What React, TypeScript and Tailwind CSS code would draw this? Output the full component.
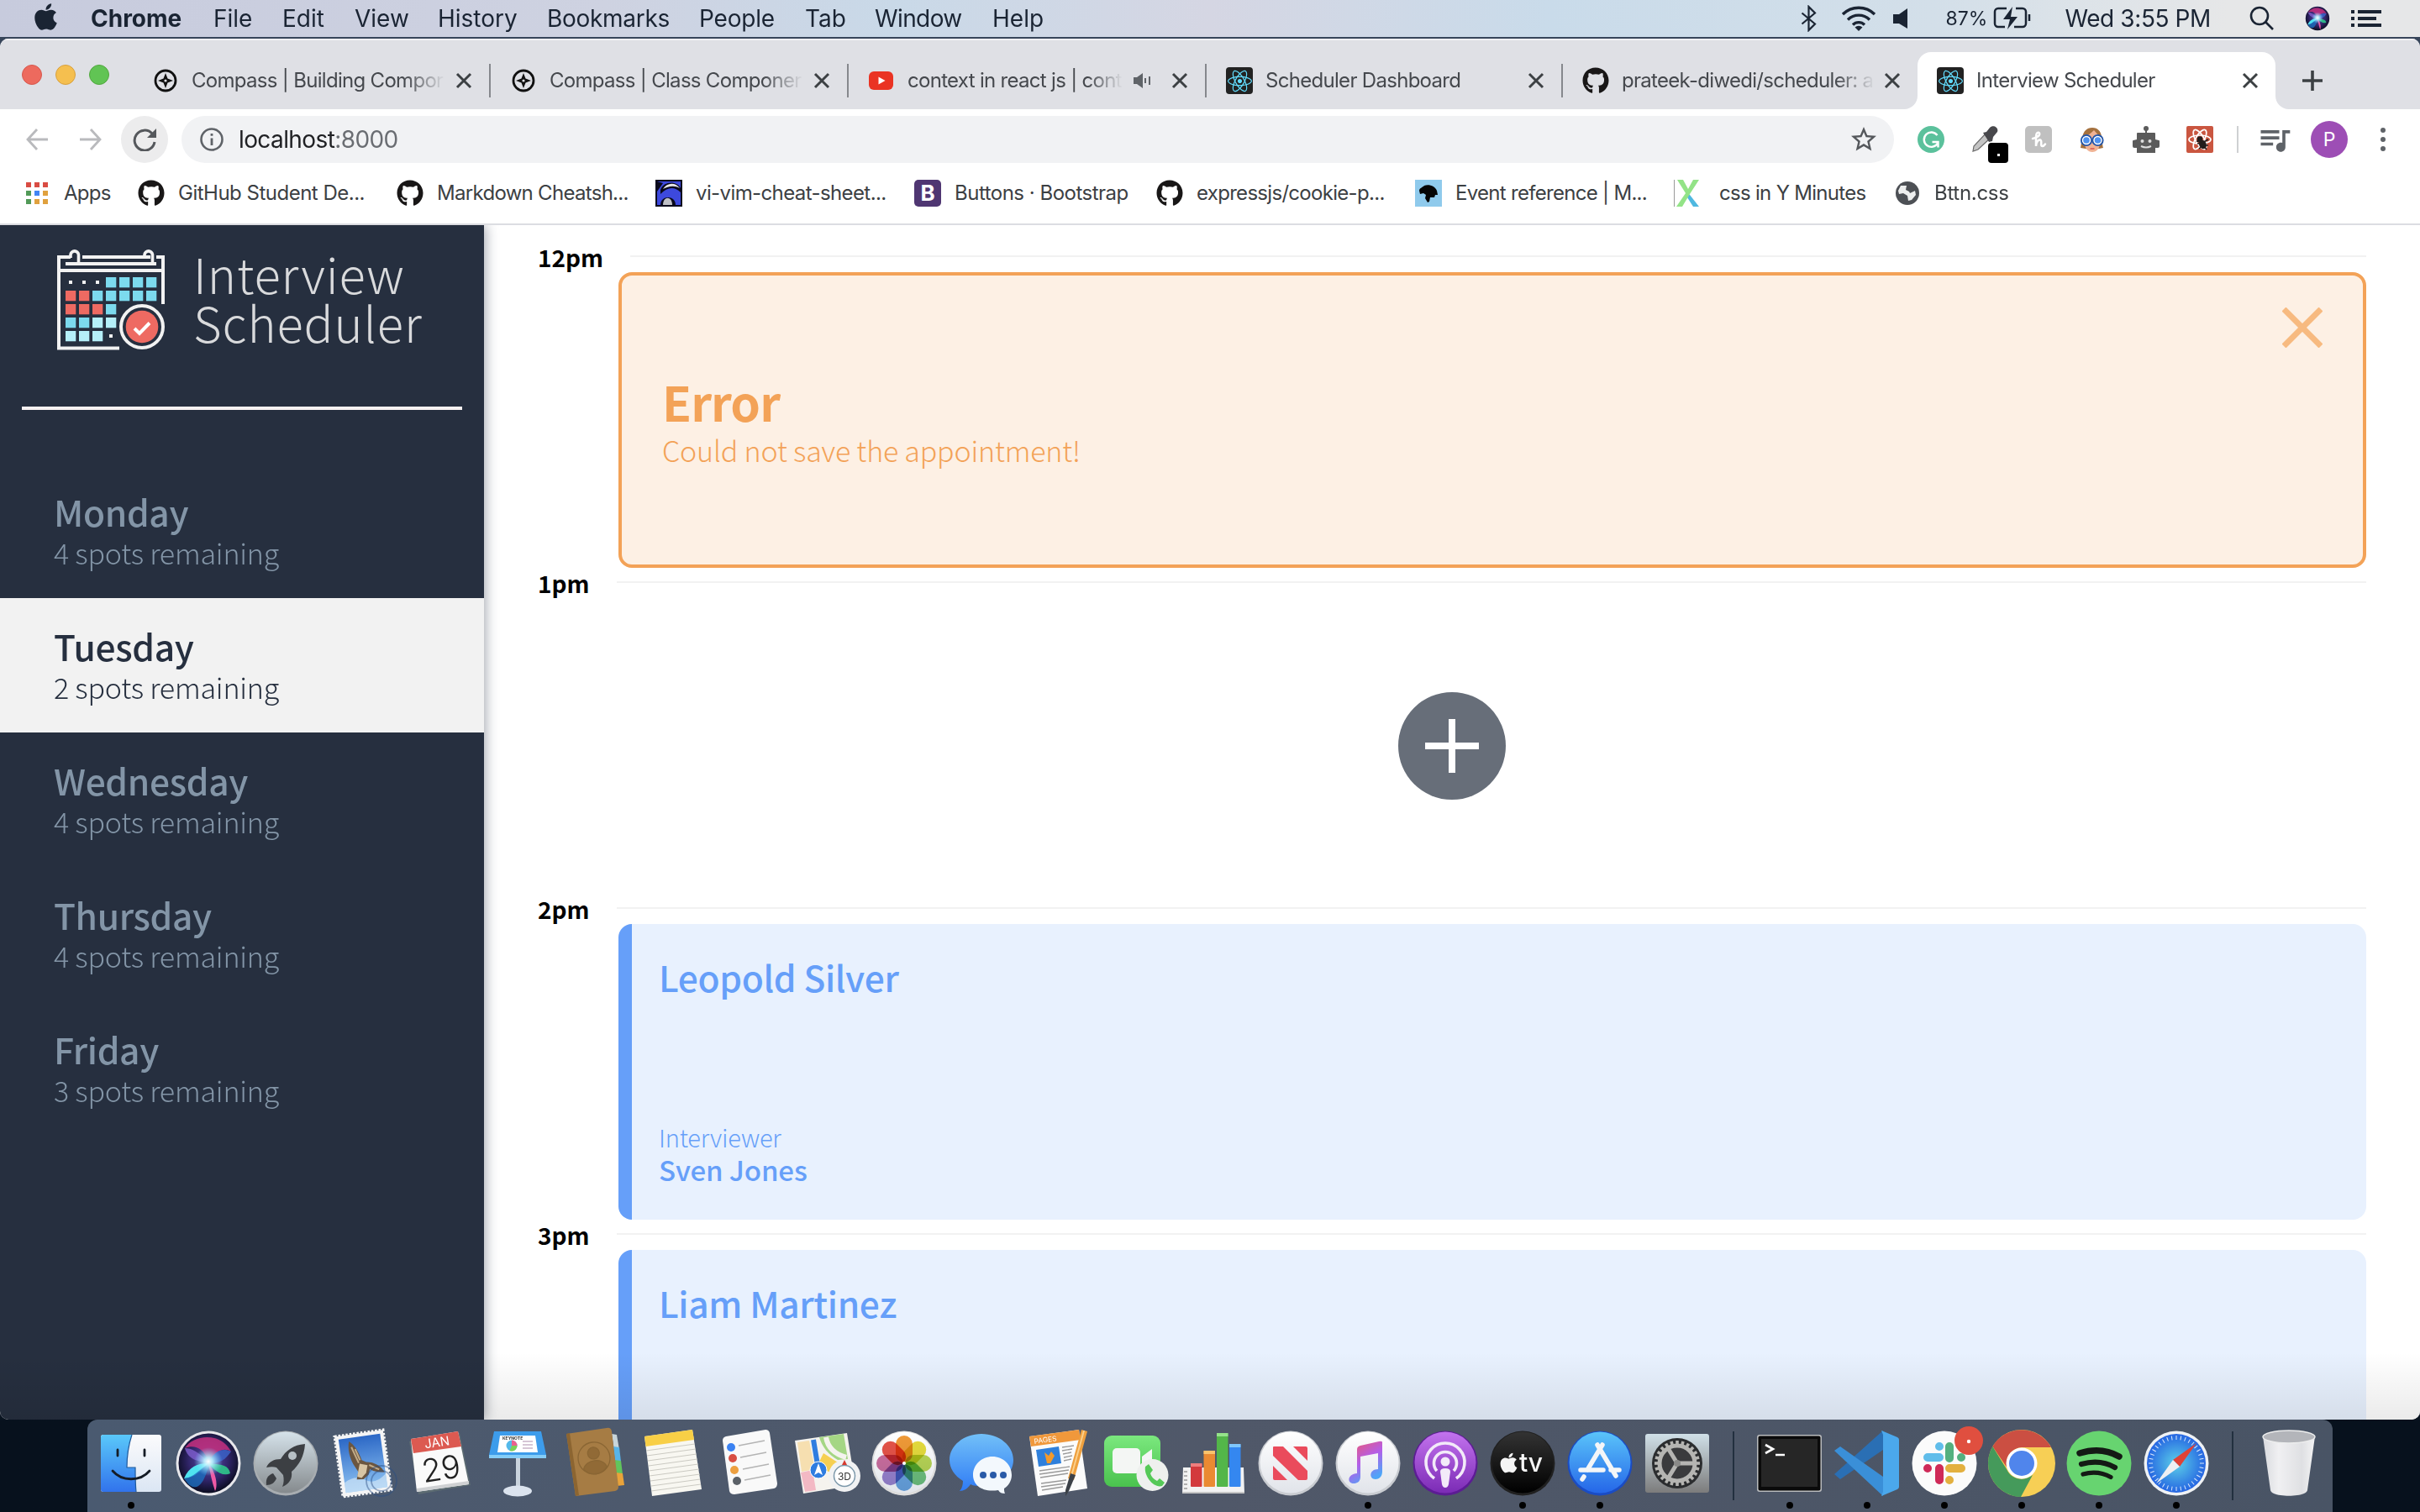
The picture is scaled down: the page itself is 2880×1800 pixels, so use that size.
import type { ReactNode } from "react";
import { FaApple, FaBluetoothB, FaGithub, FaReact } from "react-icons/fa";
import { MdQueueMusic, MdStarBorder } from "react-icons/md";

/* ---------- Menu bar ---------- */

const MENU = [
  { label: "Chrome", cls: "w-[146px] font-bold" },
  { label: "File", cls: "w-[82px]" },
  { label: "Edit", cls: "w-[86px]" },
  { label: "View", cls: "w-[99px]" },
  { label: "History", cls: "w-[130px]" },
  { label: "Bookmarks", cls: "w-[181px] tracking-[-0.3px]" },
  { label: "People", cls: "w-[126px] tracking-[-0.2px]" },
  { label: "Tab", cls: "w-[83px]" },
  { label: "Window", cls: "w-[140px] tracking-[-0.6px]" },
  { label: "Help", cls: "w-[90px]" },
];

function MenuBar() {
  return (
    <header className="flex h-[44px] items-center bg-[linear-gradient(to_right,#c7cbdd,#ced2e1_25%,#c9d9e8_37%,#d5d6e3_50%,#c9dbea_64%,#d3dfe9_80%,#e6e7e8_92%)] text-[28px] leading-[44px] text-[#1a2433]">
      <FaApple className="-mt-[4px] ml-[40px] mr-[39px] h-[36px] w-[29px]" />
      {MENU.map((m) => (
        <span key={m.label} className={`${m.cls} shrink-0 whitespace-nowrap`}>
          {m.label}
        </span>
      ))}
      <div className="ml-auto flex items-center">
        <svg viewBox="0 0 20 32" className="h-[32px] w-[20px]" fill="none" stroke="currentColor" strokeWidth="2.200">
          <path d="M1.500 9.500L17 22.500 9.500 30V2L17 9.500 1.500 22.500" />
        </svg>
        <svg viewBox="0 0 42 30" className="ml-[28px] h-[30px] w-[42px]" fill="none" stroke="currentColor" strokeWidth="3.4">
          <path d="M2 10a27 27 0 0 1 38 0M8 16.500a18.500 18.500 0 0 1 26 0M14 22.500a10 10 0 0 1 14 0" />
          <path d="M21 30l-4.500-4.500a6.500 6.500 0 0 1 9 0z" fill="currentColor" stroke="none" />
        </svg>
        <svg viewBox="0 0 18 24" className="ml-[20px] h-[24px] w-[18px]" fill="currentColor">
          <path d="M0 7h7L17 0v24L7 18H0z" />
        </svg>
        <span className="ml-[45px] text-[23px]">87%</span>
        <svg viewBox="0 0 46 28" className="ml-[7px] h-[28px] w-[46px]" fill="none" stroke="currentColor" strokeWidth="2.500">
          <path d="M16 2H6a4 4 0 0 0-4 4v14a4 4 0 0 0 4 4h8M27 2h8a4 4 0 0 1 4 4v14a4 4 0 0 1-4 4H25" />
          <path d="M23 0l-11 15h8l-3 12 12-15h-8z" fill="currentColor" stroke="none" />
          <path d="M43 9v8" />
        </svg>
        <span className="ml-[39px] tracking-[-0.4px]">Wed 3:55 PM</span>
        <svg viewBox="0 0 30 30" className="ml-[46px] h-[30px] w-[30px]" fill="none" stroke="currentColor" strokeWidth="2.600">
          <circle cx="12" cy="12" r="10" />
          <path d="M19 19l9 9" />
        </svg>
        <SiriOrb className="ml-[35px] h-[32px] w-[32px]" />
        <svg viewBox="0 0 36 24" className="ml-[24px] mr-[46px] h-[24px] w-[36px]" fill="currentColor">
          <path d="M0 2h4v4H0zM8 2h28v4H8zM0 10h4v4H0zM8 10h22v4H8zM0 18h4v4H0zM8 18h28v4H8z" />
        </svg>
      </div>
    </header>
  );
}

function SiriOrb({ className }: { className: string }) {
  return (
    <svg viewBox="0 0 80 80" className={className}>
      <defs>
        <radialGradient id="siriBg" cx="50%" cy="45%" r="55%">
          <stop offset="0" stopColor="#5b4fb0" />
          <stop offset="0.600" stopColor="#31256a" />
          <stop offset="1" stopColor="#0b0d20" />
        </radialGradient>
        <radialGradient id="siriGlow">
          <stop offset="0" stopColor="#fff" />
          <stop offset="0.300" stopColor="#bff6ff" stopOpacity="0.900" />
          <stop offset="1" stopColor="#7ad8ff" stopOpacity="0" />
        </radialGradient>
      </defs>
      <circle cx="40" cy="40" r="38.500" fill="#e8e8ec" />
      <circle cx="40" cy="40" r="35.500" fill="url(#siriBg)" />
      <path d="M12 22C22 6 54 2 67 26 58 20 48 26 40 38 34 20 22 18 12 22z" fill="#c5307f" opacity="0.850" />
      <path d="M12 22c4 14 16 16 28 17C28 26 20 22 12 22z" fill="#7f5fd0" opacity="0.800" />
      <path d="M67 26c-8 12-16 14-27 14 6-14 16-19 27-14z" fill="#3b62c8" opacity="0.850" />
      <path d="M66 52c-8 4-18-2-26-12 10 2 24 0 26 12z" fill="#2fd08d" opacity="0.850" />
      <path d="M11 58c6-14 16-18 29-18-6 6-16 18-29 18z" fill="#4fe3f0" />
      <path d="M11 58c10 16 22 16 30-18-10 6-20 18-30 18z" fill="#1d6fc0" opacity="0.800" />
      <path d="M40 40c2 10 4 22 8 33 4-8 0-24-8-33z" fill="#f05aa5" />
      <circle cx="40" cy="38" r="17" fill="url(#siriGlow)" />
    </svg>
  );
}

/* ---------- Browser chrome ---------- */

function CloseX() {
  return (
    <svg viewBox="0 0 24 24" className="ml-auto mr-[18px] h-[24px] w-[24px] shrink-0" stroke="#3c4043" strokeWidth="3">
      <path d="M4 4l16 16M20 4L4 20" />
    </svg>
  );
}

function CompassIcon() {
  return (
    <svg viewBox="0 0 32 32" className="h-[32px] w-[32px]">
      <circle cx="16" cy="16" r="12" fill="none" stroke="#111" strokeWidth="2.800" />
      <path d="M16 7l2.500 6.500L25 16l-6.500 2.500L16 25l-2.500-6.500L7 16l6.500-2.500z" fill="#111" />
      <circle cx="16" cy="16" r="1.600" fill="#dfe0e5" />
    </svg>
  );
}

function ReactFavicon() {
  return (
    <span className="flex h-[32px] w-[32px] items-center justify-center rounded-[4px] bg-[#222]">
      <FaReact className="h-[29px] w-[29px] text-[#61dafb]" />
    </span>
  );
}

function YoutubeIcon() {
  return (
    <svg viewBox="0 0 32 32" className="h-[32px] w-[32px]">
      <rect x="1" y="5" width="29" height="22" rx="6" fill="#ea3323" />
      <path d="M12.500 11.500v9l8-4.500z" fill="#fff" />
    </svg>
  );
}

const FADE_MASK = "[mask-image:linear-gradient(to_right,#000_84%,transparent)]";

function Tab({ icon, title, cls, fade, audio, divider = true }: { icon: ReactNode; title: string; cls: string; fade?: boolean; audio?: boolean; divider?: boolean }) {
  return (
    <div className={`${cls} flex h-[68px] shrink-0 items-center pl-[23px]`}>
      <span className="flex w-[32px] shrink-0 justify-center">{icon}</span>
      <span className={`ml-[15px] overflow-hidden whitespace-nowrap text-[24px] tracking-[-0.7px] text-[#45484d] ${audio ? "w-[256px]" : "w-[302px]"} ${fade ? FADE_MASK : ""}`}>{title}</span>
      {audio && (
        <svg viewBox="0 0 22 18" className="ml-[13px] h-[18px] w-[22px] shrink-0" fill="#5f6368">
          <path d="M0 5h4l7-5v18l-7-5H0zM13 6h2v6h-2zM18 4h2v10h-2z" />
        </svg>
      )}
      <CloseX />
      {divider && <span className="h-[40px] w-[2px] bg-[#86888d]" />}
    </div>
  );
}

function TabStrip() {
  return (
    <div className="flex h-[84px] border-t-2 border-[#f0f0f3] bg-[#dfe0e5] pt-[14px]">
      <div className="flex w-[158px] shrink-0 gap-[16px] pl-[26px] pt-[15px]">
        <span className="h-[24px] w-[24px] rounded-full border border-[#d6574d] bg-[#ed6a5e]" />
        <span className="h-[24px] w-[24px] rounded-full border border-[#d8a03d] bg-[#f5bf4f]" />
        <span className="h-[24px] w-[24px] rounded-full border border-[#51a73e] bg-[#61c454]" />
      </div>
      <Tab icon={<CompassIcon />} title="Compass | Building Compor" cls="w-[426px]" fade />
      <Tab icon={<CompassIcon />} title="Compass | Class Componer" cls="w-[426px]" fade />
      <Tab icon={<YoutubeIcon />} title="context in react js | cont" cls="w-[426px]" fade audio />
      <Tab icon={<ReactFavicon />} title="Scheduler Dashboard" cls="w-[424px]" />
      <Tab icon={<FaGithub className="h-[32px] w-[32px] text-[#191717]" />} title="prateek-diwedi/scheduler: a" cls="w-[422px]" fade divider={false} />
      <div className="relative">
        <Tab icon={<ReactFavicon />} title="Interview Scheduler" cls="w-[426px] rounded-t-[16px] bg-white" divider={false} />
        <svg viewBox="0 0 16 16" className="absolute -left-[16px] bottom-0 h-[16px] w-[16px]" fill="#fff">
          <path d="M16 0v16H0A16 16 0 0 0 16 0z" />
        </svg>
        <svg viewBox="0 0 16 16" className="absolute -right-[16px] bottom-0 h-[16px] w-[16px]" fill="#fff">
          <path d="M0 0v16h16A16 16 0 0 1 0 0z" />
        </svg>
      </div>
      <svg viewBox="0 0 24 24" className="ml-[32px] mt-[22px] h-[24px] w-[24px]" stroke="#3c4043" strokeWidth="3.600">
        <path d="M12 0v24M0 12h24" />
      </svg>
    </div>
  );
}

function Extensions() {
  return (
    <div className="ml-[28px] flex items-center gap-[32px]">
      <svg viewBox="0 0 32 32" className="h-[32px] w-[32px]">
        <circle cx="16" cy="16" r="16" fill="#5bc19c" />
        <path d="M23.500 11A8.700 8.700 0 1 0 24 20.500M17.500 19h7v6.500" fill="none" stroke="#fff" strokeWidth="2.400" />
      </svg>
      <div className="relative h-[32px] w-[32px]">
        <svg viewBox="0 0 32 32" className="h-[32px] w-[32px]">
          <path d="M2 30l1-6L16 10l6 5L8 28z" fill="#c4c4c4" stroke="#6b6b6b" strokeWidth="1.200" />
          <path d="M14 8l4-1 4-5c4-4 11 0 9 5l-5 6-1 5-4 1z" fill="#48484c" />
        </svg>
        <span className="absolute left-[20px] top-[20px] flex h-[24px] w-[24px] items-center justify-center rounded-[4px] bg-black pt-[5px]">
          <span className="h-[3px] w-[3px] bg-white" />
        </span>
      </div>
      <svg viewBox="0 0 32 32" className="h-[32px] w-[32px]">
        <rect width="32" height="32" rx="5" fill="#c0c0c0" />
        <path d="M9 15c6-1 9-4 8-6.500-1-2-4-.5-4 4V24c0-5 3-8 5-7.500 3 1-.5 7.500 2.500 7.500 1.500 0 2.500-1 3.500-2.500" fill="none" stroke="#fff" strokeWidth="2.500" strokeLinecap="round" />
      </svg>
      <svg viewBox="0 0 32 32" className="h-[32px] w-[32px]">
        <path d="M2 26C4 20 2 2 16 2s11 18 13 24l-5 1H8z" fill="#a5713e" />
        <path d="M7 13c4-2 8-5 11-8l7 8v9c-1 6-5 9-9 9s-8-3-9-9z" fill="#f0b293" />
        <circle cx="9" cy="17" r="4.600" fill="#4e92f0" stroke="#fff" strokeWidth="1.600" />
        <circle cx="22.500" cy="17" r="4.600" fill="#4e92f0" stroke="#fff" strokeWidth="1.600" />
        <circle cx="9" cy="17" r="6.200" fill="none" stroke="#2156ac" strokeWidth="1.800" />
        <circle cx="22.500" cy="17" r="6.200" fill="none" stroke="#2156ac" strokeWidth="1.800" />
        <path d="M13.500 27h5" stroke="#d9534f" strokeWidth="1.500" />
      </svg>
      <svg viewBox="0 0 32 32" className="h-[32px] w-[32px]" fill="#5b5b5b">
        <path d="M15 4h2v5h-2z" />
        <circle cx="16" cy="3" r="3" />
        <path d="M5 9q0-1 1-1h20q1 0 1 1v7l4 1q1 0 1 1v6q0 2-2 2h-3v6H5v-6H2q-2 0-2-2v-6q0-1 1-1l4-1z" />
        <circle cx="11.500" cy="18" r="2" fill="#ddd" />
        <circle cx="20.500" cy="18" r="2" fill="#ddd" />
        <path d="M10 24q6 3 12 0" stroke="#ddd" strokeWidth="2" fill="none" />
      </svg>
      <svg viewBox="0 0 32 32" className="h-[32px] w-[32px]">
        <rect width="32" height="32" rx="2" fill="#ca5640" />
        <g fill="none" stroke="#fff" strokeWidth="1.700">
          <ellipse cx="16" cy="16" rx="13" ry="5" />
          <ellipse cx="16" cy="16" rx="13" ry="5" transform="rotate(60 16 16)" />
          <ellipse cx="16" cy="16" rx="13" ry="5" transform="rotate(120 16 16)" />
        </g>
        <g fill="#221d1c" stroke="#221d1c" strokeWidth="1.600">
          <circle cx="16" cy="15.500" r="2.500" />
          <ellipse cx="19.500" cy="22" rx="3.500" ry="4.500" transform="rotate(-25 19.500 22)" />
          <path d="M13 21l6-1 7-4M15 27l5-4 6 0M12 18l5 1M24 28l-3-4" fill="none" />
        </g>
      </svg>
    </div>
  );
}

function Toolbar() {
  return (
    <div className="flex h-[76px] items-start bg-white pt-[8px]">
      <div className="flex h-[56px] w-full items-center">
        <svg viewBox="0 0 26 26" className="ml-[31px] h-[26px] w-[26px]" fill="none" stroke="#b9babd" strokeWidth="2.800">
          <path d="M26 13H2M13 1L2 13l11 12" />
        </svg>
        <svg viewBox="0 0 26 26" className="ml-[38px] h-[26px] w-[26px]" fill="none" stroke="#b9babd" strokeWidth="2.800">
          <path d="M0 13h24M13 1l11 12-11 12" />
        </svg>
        <span className="ml-[23px] flex h-[56px] w-[56px] items-center justify-center rounded-full bg-[#ececed]">
          <svg viewBox="0 0 28 28" className="h-[28px] w-[28px]" fill="none" stroke="#55585c" strokeWidth="3">
            <path d="M23 7a12 12 0 1 0 3 10" />
            <path d="M28 1v11H17z" fill="#55585c" stroke="none" />
          </svg>
        </span>
        <div className="ml-[16px] flex h-[56px] w-[2038px] items-center rounded-full bg-[#f1f2f4] pl-[22px] pr-[18px]">
          <svg viewBox="0 0 28 28" className="h-[28px] w-[28px]">
            <circle cx="14" cy="14" r="12.500" fill="none" stroke="#5f6368" strokeWidth="2.600" />
            <path d="M12.600 7h2.800v2.800h-2.800zM12.600 12.500h2.800V21h-2.800z" fill="#5f6368" />
          </svg>
          <span className="ml-[18px] text-[28px] tracking-[-0.6px] text-[#202124]">
            localhost<span className="text-[#6a6d72]">:8000</span>
          </span>
          <MdStarBorder className="ml-auto h-[36px] w-[36px] text-[#55585c]" />
        </div>
        <Extensions />
        <span className="ml-[28px] h-[32px] w-[2px] bg-[#cfd0d2]" />
        <MdQueueMusic className="ml-[21px] h-[44px] w-[44px] text-[#5f6368]" />
        <span className="ml-[21px] flex h-[44px] w-[44px] items-center justify-center rounded-full bg-[#9d4eb5] text-[23px] text-white">P</span>
        <svg viewBox="0 0 6 28" className="ml-[39px] h-[28px] w-[6px]" fill="#5f6368">
          <circle cx="3" cy="3" r="3" />
          <circle cx="3" cy="14" r="3" />
          <circle cx="3" cy="25" r="3" />
        </svg>
      </div>
    </div>
  );
}

const GH = <FaGithub className="h-[32px] w-[32px] text-[#191717]" />;

const BOOKMARKS: { icon: ReactNode; label: string; cls: string }[] = [
  { icon: GH, label: "GitHub Student De...", cls: "w-[308px] tracking-[-0.5px]" },
  { icon: GH, label: "Markdown Cheatsh...", cls: "w-[308px]" },
  {
    icon: (
      <svg viewBox="0 0 32 32" className="h-[32px] w-[32px]">
        <rect width="32" height="32" fill="#0a0a1c" />
        <path d="M2 30V14L9 4l-7-2h28v28z" fill="#3d49dd" />
        <path d="M6 12C10 1 26 1 30 10v5C22 7 14 9 6 17z" fill="#0a0a1c" />
        <path d="M9 11C14 3 24 3 29 10 22 6 15 8 9 11z" fill="#e6e6ea" />
        <path d="M6 30c0-12 18-12 18 0z" fill="#0a0a1c" />
        <path d="M9 30c0-11 11-11 11 0z" fill="#bfc0c6" />
      </svg>
    ),
    label: "vi-vim-cheat-sheet...",
    cls: "w-[308px] tracking-[-0.6px]",
  },
  {
    icon: <span className="flex h-[32px] w-[32px] items-center justify-center rounded-[5px] bg-[#4f3672] text-[26px] font-bold leading-none tracking-normal text-white">B</span>,
    label: "Buttons · Bootstrap",
    cls: "w-[288px] tracking-[-0.5px]",
  },
  { icon: GH, label: "expressjs/cookie-p...", cls: "w-[308px]" },
  {
    icon: (
      <svg viewBox="0 0 32 32" className="h-[32px] w-[32px]">
        <rect width="32" height="32" fill="#8fcaec" />
        <path d="M5 13c0-3 4-4 6-6 6-2 13 1 15 6l1 5-3 0-1 3-5 0-1 5-2 1-3-5 1-4-3-2-4 1z" fill="#050505" />
      </svg>
    ),
    label: "Event reference | M...",
    cls: "w-[308px]",
  },
  {
    icon: (
      <svg viewBox="0 0 38 32" className="h-[32px] w-[38px]">
        <path d="M0 0h1v32H0z" fill="#999" />
        <path d="M15 14l4 4 11 14h-7l-7-11z" fill="#4fb8e0" />
        <path d="M4 0h7l6 11L23 0h7L19 17l-9 15H3l11-16z" fill="#93e387" />
      </svg>
    ),
    label: "css in Y Minutes",
    cls: "w-[262px]",
  },
  {
    icon: (
      <svg viewBox="0 0 32 32" className="h-[32px] w-[32px]">
        <circle cx="16" cy="16" r="14" fill="#4d5055" />
        <path d="M8 7l7 0-1 5 4 2 7-1 1 5-5 6-4 1-1-6-5-3-5 1-1-4z" fill="#fff" opacity="0.900" />
        <path d="M16 10l6-4 5 6-8 4z" fill="#4d5055" />
      </svg>
    ),
    label: "Bttn.css",
    cls: "w-[200px] tracking-[-0.3px]",
  },
];

const APP_DOTS = ["#d94c43", "#d94c43", "#d94c43", "#529a58", "#4285f4", "#e0a13e", "#529a58", "#e0a13e", "#e0a13e"];

function BookmarksBar() {
  return (
    <div className="flex h-[62px] items-center border-b-2 border-[#dcdde2] bg-white pb-[12px] text-[24px] tracking-[-0.7px] text-[#3c4043]">
      <div className="flex w-[164px] shrink-0 items-center pl-[31px]">
        <div className="grid grid-cols-3 gap-[4px]">
          {APP_DOTS.map((c, i) => (
            <span key={i} className="h-[6px] w-[6px]" style={{ background: c }} />
          ))}
        </div>
        <span className="ml-[19px]">Apps</span>
      </div>
      {BOOKMARKS.map((b) => (
        <div key={b.label} className={`${b.cls} flex shrink-0 items-center gap-[16px] whitespace-nowrap`}>
          {b.icon}
          <span>{b.label}</span>
        </div>
      ))}
    </div>
  );
}

/* ---------- Scheduler app ---------- */

const SQUARES: [number, number, string][] = [
  [3, 0, "#7cdaee"], [4, 0, "#7cdaee"], [5, 0, "#7cdaee"], [6, 0, "#7cdaee"],
  [0, 1, "#ee6a62"], [1, 1, "#ee6a62"], [2, 1, "#7cdaee"], [3, 1, "#7cdaee"], [4, 1, "#7cdaee"], [5, 1, "#7cdaee"], [6, 1, "#7cdaee"],
  [0, 2, "#ee6a62"], [1, 2, "#ee6a62"], [2, 2, "#ee6a62"], [3, 2, "#7cdaee"],
  [0, 3, "#7cdaee"], [1, 3, "#7cdaee"], [2, 3, "#b5eff9"], [3, 3, "#b5eff9"],
  [0, 4, "#b5eff9"], [1, 4, "#b5eff9"], [2, 4, "#b5eff9"],
];

function CalendarLogo() {
  return (
    <svg viewBox="0 0 128 121" className="h-[121px] w-[128px]">
      <g fill="none" stroke="#f2f2f2" strokeWidth="4">
        <path d="M16 10H2V118.500H74M118 10H126V66M30 10H111M10 18H118M2 26H126" />
        <path d="M16 11V7a4.800 4.800 0 0 1 9.500 0V18M104 11V7a4.800 4.800 0 0 1 9.500 0V18" strokeWidth="3.600" />
      </g>
      {SQUARES.map(([c, r, fill]) => (
        <rect key={`${c}-${r}`} x={10 + 16 * c} y={34 + 16 * r} width="12.300" height="12.300" fill={fill} />
      ))}
      <path d="M14 38h4v4h-4zM30 38h4v4h-4zM46 38h4v4h-4zM62 102h4v4h-4z" fill="#f2f2f2" />
      <circle cx="101" cy="93" r="25" fill="#262f3f" stroke="#f2f2f2" strokeWidth="4" />
      <circle cx="101" cy="93" r="19.300" fill="#ee6a62" />
      <path d="M92 95l6 6 12-12.500" fill="none" stroke="#fff" strokeWidth="4" />
    </svg>
  );
}

const DAYS = [
  { name: "Monday", spots: "4 spots remaining" },
  { name: "Tuesday", spots: "2 spots remaining", selected: true },
  { name: "Wednesday", spots: "4 spots remaining" },
  { name: "Thursday", spots: "4 spots remaining" },
  { name: "Friday", spots: "3 spots remaining" },
];

function Sidebar() {
  return (
    <aside className="z-10 flex w-[576px] shrink-0 flex-col bg-[#262f3f] pt-[28px] shadow-[2px_0_14px_rgba(30,40,60,0.4)]">
      <div className="flex h-[120px] pl-[68px]">
        <CalendarLogo />
        <div className="ml-[34px] text-[58px] font-light leading-[58px] tracking-[0.9px] text-[#d9dadc]">
          <div>Interview</div>
          <div>Scheduler</div>
        </div>
      </div>
      <hr className="mx-[26px] mt-[68px] h-[4px] border-0 bg-[#f7f1f1]" />
      <nav className="mt-[64px]">
        {DAYS.map((d) => (
          <div key={d.name} className={`h-[160px] pl-[64px] pt-[33px] leading-[48px] ${d.selected ? "bg-[#f2f2f2] text-[#262f3f]" : "text-[#8395a7]"}`}>
            <h2 className="text-[42.500px] font-medium tracking-[-0.35px]">{d.name}</h2>
            <h3 className="pt-[1px] text-[34px] font-light tracking-[-0.2px]">{d.spots}</h3>
          </div>
        ))}
      </nav>
    </aside>
  );
}

function HourRow({ label, first, children }: { label: string; first?: boolean; children: ReactNode }) {
  return (
    <section className="flex h-[388px] shrink-0">
      <h4 className="w-[96px] text-[28px] font-bold leading-[32px] text-black">{label}</h4>
      <div className="w-[2080px] pt-[14px]">
        <hr className={`${first ? "ml-[14px]" : "-ml-[2px]"} mb-[18px] h-[2px] border-0 bg-[#f2f2f2]`} />
        {children}
      </div>
    </section>
  );
}

function Appointment({ student, interviewer }: { student: string; interviewer?: string }) {
  return (
    <article className="flex h-[352px] flex-col justify-between rounded-[16px] border-l-[16px] border-[#669ff9] bg-[#e8f1fe] pb-[40px] pl-[32px] pt-[35px] text-[#669ff9]">
      <h2 className="text-[42.500px] font-medium leading-[56px] tracking-[-0.35px]">{student}</h2>
      {interviewer && (
        <div>
          <h4 className="pt-[1px] text-[29px] font-light leading-[38px] tracking-[-0.2px]">Interviewer</h4>
          <h3 className="text-[33px] font-medium leading-[40px] tracking-[-0.15px]">{interviewer}</h3>
        </div>
      )}
    </article>
  );
}

function Schedule() {
  return (
    <main className="flex flex-1 flex-col bg-white pl-[64px] pt-[22px]">
      <HourRow label="12pm" first>
        <article className="flex h-[352px] justify-between rounded-[16px] border-4 border-[#f3a257] bg-[#fdf0e4] pl-[48px] text-[#f3a257]">
          <div className="pt-[117px]">
            <h1 className="text-[57px] font-bold leading-[64px] tracking-[-0.9px]">Error</h1>
            <h3 className="mt-[3px] text-[34px] font-light leading-[48px] tracking-[-0.2px]">Could not save the appointment!</h3>
          </div>
          <svg viewBox="0 0 48 48" className="mr-[48px] mt-[38px] h-[48px] w-[48px]" stroke="#f7ba80" strokeWidth="7">
            <path d="M2 2l44 44M46 2L2 46" />
          </svg>
        </article>
      </HourRow>
      <HourRow label="1pm">
        <div className="flex h-[352px] items-center justify-center pr-[96px]">
          <svg viewBox="0 0 128 128" className="h-[128px] w-[128px]">
            <circle cx="64" cy="64" r="64" fill="#676e79" />
            <path d="M60 32h8v28h28v8H68v28h-8V68H32v-8h28z" fill="#fff" />
          </svg>
        </div>
      </HourRow>
      <HourRow label="2pm">
        <Appointment student="Leopold Silver" interviewer="Sven Jones" />
      </HourRow>
      <HourRow label="3pm">
        <Appointment student="Liam Martinez" />
      </HourRow>
    </main>
  );
}

/* ---------- Dock ---------- */

function Icon({ children }: { children: ReactNode }) {
  return (
    <svg viewBox="0 0 80 80" className="h-[80px] w-[80px] overflow-visible">
      {children}
    </svg>
  );
}

function Disc({ fill, rim = "#c9ccd1" }: { fill: string; rim?: string }) {
  return (
    <>
      <circle cx="40" cy="40" r="38.500" fill={rim} />
      <circle cx="40" cy="39" r="36.500" fill={fill} />
    </>
  );
}

function DockDefs() {
  return (
    <svg className="absolute h-0 w-0">
      <defs>
        <linearGradient id="finderL" x2="0" y2="1"><stop stopColor="#5ac8fa" /><stop offset="1" stopColor="#3173ec" /></linearGradient>
        <linearGradient id="finderR" x2="0" y2="1"><stop stopColor="#fbfbfc" /><stop offset="1" stopColor="#dbe6f4" /></linearGradient>
        <linearGradient id="silver" x2="0" y2="1"><stop stopColor="#d5e2ea" /><stop offset="1" stopColor="#858a8d" /></linearGradient>
        <linearGradient id="sky" x2="0" y2="1"><stop stopColor="#2c68c6" /><stop offset="1" stopColor="#8fc4f3" /></linearGradient>
        <linearGradient id="whiteDisc" x2="0" y2="1"><stop stopColor="#fff" /><stop offset="1" stopColor="#e1e4ea" /></linearGradient>
        <linearGradient id="bubble" x2="0" y2="1"><stop stopColor="#72c0f8" /><stop offset="1" stopColor="#2f7bf5" /></linearGradient>
        <linearGradient id="green" x2="0" y2="1"><stop stopColor="#7be87e" /><stop offset="1" stopColor="#4ac24e" /></linearGradient>
        <linearGradient id="note" x2="0.500" y2="1"><stop stopColor="#f25767" /><stop offset="0.550" stopColor="#b45ee8" /><stop offset="1" stopColor="#4ea5f8" /></linearGradient>
        <linearGradient id="purple" x2="0" y2="1"><stop stopColor="#c373ee" /><stop offset="1" stopColor="#7b2bb5" /></linearGradient>
        <linearGradient id="black" x2="0" y2="1"><stop stopColor="#333" /><stop offset="1" stopColor="#000" /></linearGradient>
        <linearGradient id="blue" x2="0" y2="1"><stop stopColor="#5ac4fa" /><stop offset="1" stopColor="#2566e8" /></linearGradient>
        <linearGradient id="prefs" x2="0" y2="1"><stop stopColor="#d0e0e8" /><stop offset="1" stopColor="#7c7c7c" /></linearGradient>
        <radialGradient id="safari"><stop stopColor="#5cd0e8" /><stop offset="1" stopColor="#2565e2" /></radialGradient>
        <linearGradient id="trash"><stop stopColor="#d8dade" /><stop offset="0.300" stopColor="#f0f0f2" /><stop offset="0.750" stopColor="#dfe0e3" /><stop offset="1" stopColor="#f4f4f5" /></linearGradient>
      </defs>
    </svg>
  );
}

const PETALS = ["#f09a37", "#e6dc3c", "#b9d655", "#6fc27e", "#6aa6e0", "#9a84cf", "#cc6f9f", "#e65348"];
const TEETH = Array.from({ length: 24 }, (_, i) => i * 15);
const TICKS = Array.from({ length: 36 }, (_, i) => i * 10);

const DOCK_MAIN: { name: string; running?: boolean; art: ReactNode }[] = [
  {
    name: "Finder",
    running: true,
    art: (
      <Icon>
        <rect x="4" y="6" width="72" height="68" rx="3" fill="url(#finderR)" />
        <path d="M7 6h34c-4 12-6 24-6 39h10c0 10 0 20 1 29H7q-3 0-3-3V9q0-3 3-3z" fill="url(#finderL)" />
        <path d="M41 6c-4 12-6 24-6 39h10c0 10 0 20 1 29" fill="none" stroke="#1f5a9c" strokeWidth="1.200" />
        <path d="M24 24v7M56 24v7M18 49c11 13 33 13 44 0" fill="none" stroke="#151c26" strokeWidth="2.800" strokeLinecap="round" />
      </Icon>
    ),
  },
  { name: "Siri", art: <SiriOrb className="h-[80px] w-[80px]" /> },
  {
    name: "Launchpad",
    art: (
      <Icon>
        <Disc fill="url(#silver)" rim="#a8adb1" />
        <path d="M63 17c-14 1-23 8-29 18-8 0-14 3-17 10 5-1 9-1 12 0l8 9c1 5 1 9-1 14 9-4 12-10 11-18 9-8 15-18 16-33z" fill="#3c3f43" />
        <path d="M25 52c-6 2-9 6-8 14 6 0 10-3 12-8z" fill="#3c3f43" />
        <circle cx="48" cy="31" r="5" fill="#b7c0c5" />
      </Icon>
    ),
  },
  {
    name: "Mail",
    art: (
      <Icon>
        <g transform="rotate(-8 40 40)">
          <rect x="11" y="4" width="58" height="72" fill="#f5f5f5" stroke="#f5f5f5" strokeWidth="3.500" strokeDasharray="2.600 1.800" />
          <rect x="15" y="8" width="50" height="64" fill="url(#sky)" />
          <path d="M15 60q14-8 25 0t25-4v16H15z" fill="#cfe4f7" opacity="0.700" />
          <path d="M27 12c6 5 10 14 12 24l5 3c9 1 17 7 20 15-6-1-12-2-17-6l-2 6-7 5-8-1 3-9-3-6c-5-10-6-22-3-31z" fill="#6b5640" />
          <path d="M36 40l9 3-3 9-6 5-5-2z" fill="#d8c5a4" />
          <path d="M29 19l6 20M33 22l4 14M47 43l11 7" stroke="#c2ab87" strokeWidth="2" />
        </g>
        <g fill="none" stroke="#2a4e84" strokeWidth="1.800" opacity="0.450">
          <circle cx="62" cy="61" r="18" />
          <circle cx="62" cy="61" r="12" />
        </g>
      </Icon>
    ),
  },
  {
    name: "Calendar",
    art: (
      <Icon>
        <path d="M3 14l60-10 13 62-62 11z" fill="#5c6b72" />
        <path d="M5 11L61 2 74 65 12 74z" fill="#fafafa" />
        <path d="M12 70l62-9v4l-62 9z" fill="#cfd1d3" />
        <path d="M5 11L61 2 65 20 8 28z" fill="#dc5a51" />
        <g transform="rotate(-9 40 40)" textAnchor="middle" className="font-['Inter']">
          <text x="40" y="20" fontSize="15" fill="#fff">JAN</text>
          <text x="40" y="60" fontSize="38" fill="#222" className="font-light">29</text>
        </g>
      </Icon>
    ),
  },
  {
    name: "Keynote",
    art: (
      <Icon>
        <rect x="38" y="32" width="5" height="40" fill="#c9d3dd" />
        <ellipse cx="40" cy="73" rx="17" ry="6.500" fill="#dbe3ee" />
        <path d="M12 2h56l6 28v4H6v-4z" fill="#3d9ceb" />
        <path d="M6 30h68v4H6z" fill="#85cdf7" />
        <path d="M19 7h42l3 20H16z" fill="#fff" />
        <text x="22" y="12" fontSize="5" fill="#333" className="font-['Inter'] font-bold">KEYNOTE</text>
        <circle cx="33" cy="19" r="6.500" fill="#54b9ea" />
        <path d="M33 19v-6.500a6.500 6.500 0 0 1 6.500 6.500z" fill="#eb5f8f" />
        <path d="M33 19h6.500a6.500 6.500 0 0 1-9 6z" fill="#7ccf58" />
        <path d="M46 14h12M46 18h12M46 22h12" stroke="#c9b4c9" strokeWidth="1.500" />
      </Icon>
    ),
  },
  {
    name: "Contacts",
    art: (
      <Icon>
        <path d="M60 5l6 1 3 18-6 1z" fill="#c8d5da" />
        <path d="M62 20l7 1 2 17-7 1z" fill="#58b4e8" />
        <path d="M63 36l8 1 2 16-8 1z" fill="#62c55c" />
        <path d="M64 51l9 1 2 14-9 1z" fill="#e9a33a" />
        <path d="M6 5L54-2q5-1 6 4l8 66q0 4-4 5L17 79z" fill="#a67c44" />
        <path d="M6 5l4-1 11 74-4 1z" fill="#8c6531" />
        <g transform="rotate(-7 38 34)" fill="none" stroke="#8a6634" strokeWidth="1.300">
          <circle cx="39" cy="34" r="19" />
          <circle cx="39" cy="28" r="7" fill="#916a36" />
          <path d="M25 46c3-12 25-12 28 0-7 9-21 9-28 0z" fill="#916a36" />
        </g>
      </Icon>
    ),
  },
  {
    name: "Notes",
    art: (
      <Icon>
        <path d="M7 8L64 0 75 71 16 79z" fill="#f8f7f1" />
        <path d="M7 8L64 0 66 12 8.500 20z" fill="#f8cf46" />
        <path d="M9 25l58-8M10 31l58-8M11 37l58-8M12 43l58-8M12 49l59-8M13 55l59-8M14 61l59-8M15 67l58-8M15 73l59-8" stroke="#c5c4bc" strokeWidth="0.900" />
      </Icon>
    ),
  },
  {
    name: "Reminders",
    art: (
      <Icon>
        <path d="M12 8L59 0q4 0 5 4l9 60q0 5-4 6l-47 7q-5 0-6-4L8 13q0-4 4-5z" fill="#f9f9f9" />
        <path d="M27 19l31-6M29 33l31-6M32 47l31-6M34 60l31-6" stroke="#b4b4b4" strokeWidth="1.400" />
        <circle cx="18" cy="21" r="5" fill="#3b82f2" />
        <circle cx="20" cy="34" r="5" fill="#d84e43" />
        <circle cx="22" cy="48" r="5" fill="#eda040" />
        <circle cx="25" cy="61" r="5" fill="#5b6168" />
      </Icon>
    ),
  },
  {
    name: "Maps",
    art: (
      <Icon>
        <path d="M2 13L64 4 74 66 12 76z" fill="#f5f3ee" />
        <path d="M5 15l14-2 7 34-16 3z" fill="#f6dfb0" />
        <path d="M9 51l14-3 4 24-13 2z" fill="#f3b9c4" />
        <path d="M31 9l29-4 5 30-12 1C42 30 34 20 31 9z" fill="#a5d684" />
        <path d="M39 9c2 12 10 20 24 24" fill="none" stroke="#f5f3ee" strokeWidth="6" />
        <path d="M28 44l24 10 4-13-20-13z" fill="#f6cf51" />
        <path d="M24 12l6 36" stroke="#2f7de0" strokeWidth="6" />
        <circle cx="30" cy="48" r="10" fill="#2f7de0" stroke="#fff" strokeWidth="1" />
        <path d="M30 40l5 14-5-3-5 3z" fill="#fff" />
        <circle cx="61" cy="55" r="19" fill="#f1f2f3" />
        <circle cx="61" cy="55" r="12.500" fill="#fff" stroke="#7c98aa" strokeWidth="1.500" />
        <path d="M61 36l3 6h-6z" fill="#d83a2f" />
        <text x="61" y="60" fontSize="12" textAnchor="middle" fill="#333" className="font-['Inter']">3D</text>
      </Icon>
    ),
  },
  {
    name: "Photos",
    art: (
      <Icon>
        <Disc fill="url(#whiteDisc)" rim="#dcdcdc" />
        {PETALS.map((c, i) => (
          <rect key={c} x="30" y="7" width="20" height="32" rx="10" fill={c} className="mix-blend-multiply" transform={`rotate(${i * 45} 40 40)`} />
        ))}
        <circle cx="40" cy="40" r="2" fill="#fff" />
      </Icon>
    ),
  },
  {
    name: "Messages",
    art: (
      <Icon>
        <path d="M40 5c21 0 38 14 38 31S61 67 40 67c-5 0-9 0-13-2-3 5-8 8-13 8 3-3 4-8 4-12C8 55 2 46 2 36 2 19 19 5 40 5z" fill="url(#bubble)" />
        <path d="M53 32c13 0 23 10 23 22 0 7-4 13-9 16 0 2 0 4 1 6-4 0-6-1-8-4-19 3-30-6-30-18 0-12 10-22 23-22z" fill="#f3f8fd" />
        <g fill="#2a5ba8"><circle cx="42" cy="54" r="4" /><circle cx="54" cy="54" r="4" /><circle cx="66" cy="54" r="4" /></g>
      </Icon>
    ),
  },
  {
    name: "Pages",
    art: (
      <Icon>
        <path d="M5 8L64 0 74 70 15 79z" fill="#fbfbfb" />
        <path d="M5 8L64 0 66 12 7 20z" fill="#f0983b" />
        <text x="11" y="17" fontSize="8.500" fill="#fff" transform="rotate(-8 11 17)" className="font-['Inter']">PAGES</text>
        <path d="M13 24l27-4 3 20-27 4z" fill="#2f80dc" />
        <path d="M23 27l5 4 3-5 4 5-5 9h-4z" fill="#f39a2c" />
        <path d="M44 21l14-2M44 25l12-2M45 29l10-2M46 33l10-2M46 37l9-2M17 49l36-5M17 53l35-5M18 57l33-5M19 64l30-4M19 68l29-4M20 72l25-4" stroke="#9a9a9a" strokeWidth="1.300" />
        <path d="M67 0l7 2-16 58-7-2z" fill="#efa03e" />
        <path d="M69 1l2 0-16 58-2 0z" fill="#fbd08d" />
        <path d="M54 52l6 2-8 19-4 6 0-7z" fill="#3c4148" />
      </Icon>
    ),
  },
  {
    name: "FaceTime",
    art: (
      <Icon>
        <rect x="2" y="7" width="67" height="61" rx="9" fill="url(#green)" />
        <rect x="12" y="22" width="33" height="30" rx="5" fill="#f4f6f4" />
        <path d="M47 32l12-9v26l-12-8z" fill="#f4f6f4" />
        <circle cx="59.500" cy="54" r="19" fill="#eef0ee" />
        <path d="M51 44l4-3 5 7-3 4c1 4 4 7 8 9l3-3 6 5-3 4c-10 3-22-12-20-23z" fill="#55c957" />
      </Icon>
    ),
  },
  {
    name: "Numbers",
    art: (
      <Icon>
        <path d="M4 45h72l1 31H3z" fill="#f2f2f2" />
        <path d="M3 74h74v2H3z" fill="#c6c6c6" />
        <path d="M5 50h4M5 55h4M5 60h4M5 65h4M5 70h4" stroke="#999" strokeWidth="1.500" />
        <rect x="13" y="40" width="13.500" height="28" rx="1" fill="#d3393c" />
        <rect x="28.500" y="25" width="13.500" height="43" rx="1" fill="#ea8a32" />
        <rect x="44" y="4" width="13.500" height="64" rx="1" fill="#53b649" />
        <rect x="59" y="17" width="13.500" height="51" rx="1" fill="#3487f0" />
        <path d="M13 40h13.500v4H13z" fill="#ef7d7d" />
        <path d="M28.500 25H42v4H28.500z" fill="#fac36c" />
        <path d="M44 4h13.500v4H44z" fill="#95e38a" />
        <path d="M59 17h13.500v4H59z" fill="#7fc6fa" />
      </Icon>
    ),
  },
  {
    name: "News",
    art: (
      <Icon>
        <Disc fill="url(#whiteDisc)" />
        <path d="M20 20h11l29 29v9q0 2-2 2H49L19 31V21q0-1 1-1zM43 20h15q2 0 2 2v15zM19 43l17 17H21q-2 0-2-2z" fill="#ea4b5c" />
      </Icon>
    ),
  },
  {
    name: "Music",
    running: true,
    art: (
      <Icon>
        <Disc fill="url(#whiteDisc)" />
        <path d="M57 15v35c0 6-4 9-8 9-8 0-8-12 3-12V28l-21 4v24c0 6-4 8-8 8-8 0-8-11 4-12V24c0-3 1-4 4-5l22-5q4-1 4 1z" fill="url(#note)" />
      </Icon>
    ),
  },
  {
    name: "Podcasts",
    art: (
      <Icon>
        <Disc fill="url(#purple)" rim="#5c1c94" />
        <g fill="none" stroke="#f3eaf9" strokeWidth="3.600">
          <path d="M27 58a23 23 0 1 1 26 0" />
          <path d="M30 49a13.500 13.500 0 1 1 20 0" />
        </g>
        <circle cx="40" cy="38" r="5.500" fill="#f3eaf9" />
        <path d="M34 50q0-4 6-4t6 4l-2 15q-1 4-4 4t-4-4z" fill="#f3eaf9" />
      </Icon>
    ),
  },
  {
    name: "TV",
    running: true,
    art: (
      <Icon>
        <Disc fill="url(#black)" rim="#202020" />
        <FaApple x="10" y="26" size={27} color="#f5f5f5" />
        <text x="36" y="50" fontSize="30" fill="#f5f5f5" className="font-['Inter'] font-medium">tv</text>
      </Icon>
    ),
  },
  {
    name: "App Store",
    running: true,
    art: (
      <Icon>
        <Disc fill="url(#blue)" rim="#1a4cc4" />
        <g stroke="#f4f6f8" strokeWidth="5.500" strokeLinecap="round">
          <path d="M43 18L25 48M37 18l22 37M17 48h27M53 48h10M21 56l-2 3" />
        </g>
      </Icon>
    ),
  },
  {
    name: "System Preferences",
    art: (
      <Icon>
        <rect x="2" y="5" width="76" height="70" rx="3" fill="url(#prefs)" />
        <circle cx="40" cy="40" r="30" fill="#2b2d2f" />
        {TEETH.map((a) => (
          <rect key={a} x="38.200" y="13" width="3.600" height="7" fill="#b5b5b2" transform={`rotate(${a} 40 40)`} />
        ))}
        <circle cx="40" cy="40" r="21" fill="#3a3b3d" stroke="#b5b5b2" strokeWidth="5" />
        <path d="M40 40L29 22M40 40L29 58M40 40h21" stroke="#b5b5b2" strokeWidth="5" />
        <circle cx="40" cy="40" r="4" fill="#8a8a88" />
      </Icon>
    ),
  },
];

const DOCK_RUNNING: { name: string; art: ReactNode }[] = [
  {
    name: "Terminal",
    art: (
      <Icon>
        <rect x="1" y="6" width="77" height="68" rx="3" fill="#b9bbbd" />
        <rect x="2.500" y="7.500" width="74" height="65" rx="2" fill="#0a0a0a" />
        <rect x="6" y="11" width="67" height="57" fill="#262626" />
        <path d="M11 18l9 5-9 5M23 30h11" fill="none" stroke="#fff" strokeWidth="2.600" />
      </Icon>
    ),
  },
  {
    name: "VS Code",
    art: (
      <Icon>
        <path d="M1 53l7 6 51-35V1z" fill="#2a6fb4" />
        <path d="M1 25l7-5 51 36v23z" fill="#3a8fd8" />
        <path d="M57 1l19 8q2 1 2 3v56q0 2-2 3l-19 8 2-5V6z" fill="#4ba8ec" />
      </Icon>
    ),
  },
  {
    name: "Slack",
    art: (
      <Icon>
        <circle cx="40" cy="40" r="38.500" fill="#fbfbfb" />
        <g strokeWidth="10" strokeLinecap="round">
          <path d="M34 20v0M20 33h14" stroke="#60bdea" />
          <path d="M46 20v14M60 33v0" stroke="#54b07f" />
          <path d="M34 46v14M20 46v0" stroke="#cf2a58" />
          <path d="M46 46h14M46 60v0" stroke="#e3b03f" />
        </g>
        <circle cx="69" cy="13" r="17" fill="#e04f3f" />
        <circle cx="69" cy="14" r="2.200" fill="#fff" />
      </Icon>
    ),
  },
  {
    name: "Chrome",
    art: (
      <Icon>
        <circle cx="40" cy="40" r="40" fill="#f7cf55" />
        <path d="M5.400 20A40 40 0 0 1 75 21H40a19 19 0 0 0-17 25z" fill="#cb4f42" />
        <path d="M5.400 20A40 40 0 0 0 39 80l14-26c-10 8-25 6-31-7z" fill="#459a5b" />
        <circle cx="40" cy="40" r="18.500" fill="#fff" />
        <circle cx="40" cy="40" r="15" fill="#5085ec" />
      </Icon>
    ),
  },
  {
    name: "Spotify",
    art: (
      <Icon>
        <circle cx="40" cy="40" r="38.500" fill="#67d470" />
        <g fill="none" stroke="#141a15" strokeLinecap="round">
          <path d="M17 28c16-5 33-4 47 4" strokeWidth="7.500" />
          <path d="M19 41c14-4 28-3 40 4" strokeWidth="6.200" />
          <path d="M21 53c11-3 23-2 33 3.500" strokeWidth="5.200" />
        </g>
      </Icon>
    ),
  },
  {
    name: "Safari",
    art: (
      <Icon>
        <circle cx="40" cy="40" r="38.500" fill="#f0f2f4" />
        <circle cx="40" cy="40" r="35" fill="url(#safari)" />
        {TICKS.map((a) => (
          <path key={a} d="M40 7v5" stroke="#dbe9fb" strokeWidth="1" transform={`rotate(${a} 40 40)`} />
        ))}
        <path d="M64 16L36 36l8 8z" fill="#e04236" />
        <path d="M16 64l20-28 8 8z" fill="#eef0f2" />
      </Icon>
    ),
  },
];

function DockCell({ children, running }: { children: ReactNode; running?: boolean }) {
  return (
    <div className="flex w-[92px] shrink-0 flex-col items-center pt-[12px]">
      {children}
      {running && <span className="mt-[6px] h-[8px] w-[8px] rounded-full bg-black" />}
    </div>
  );
}

function DockDivider() {
  return (
    <div className="flex w-[42px] shrink-0 justify-center pt-[14px]">
      <span className="h-[82px] w-[2px] bg-[#22303f]" />
    </div>
  );
}

function Dock() {
  return (
    <footer className="flex h-[110px] justify-center">
      <div className="flex w-[2672px] rounded-t-[12px] bg-linear-to-r from-[#4a5a70] via-[#505869] to-[#495465] px-[6px]">
        {DOCK_MAIN.map((a) => (
          <DockCell key={a.name} running={a.running}>{a.art}</DockCell>
        ))}
        <DockDivider />
        {DOCK_RUNNING.map((a) => (
          <DockCell key={a.name} running>{a.art}</DockCell>
        ))}
        <DockDivider />
        <DockCell>
          <Icon>
            <path d="M9 8l9 64c1 9 43 9 44 0l9-64z" fill="url(#trash)" />
            <ellipse cx="40" cy="8.500" rx="31" ry="7.500" fill="#b3b5ba" stroke="#eceded" strokeWidth="1.500" />
          </Icon>
        </DockCell>
      </div>
    </footer>
  );
}

export default function App() {
  return (
    <div className="flex h-[1800px] w-[2880px] flex-col overflow-hidden bg-linear-to-b from-[#37455a] from-90% to-[#07111d] to-94% font-['Inter',sans-serif]">
      <DockDefs />
      <MenuBar />
      <div className="relative mt-[2px] flex h-[1644px] flex-col overflow-hidden rounded-[10px] bg-white">
        <TabStrip />
        <Toolbar />
        <BookmarksBar />
        <div className="flex min-h-0 flex-1 overflow-hidden font-['Noto_Sans_CJK_JP',sans-serif]">
          <Sidebar />
          <Schedule />
        </div>
        <div className="pointer-events-none absolute inset-x-0 bottom-0 z-20 h-[80px] bg-linear-to-b from-transparent to-black/8" />
      </div>
      <Dock />
    </div>
  );
}
